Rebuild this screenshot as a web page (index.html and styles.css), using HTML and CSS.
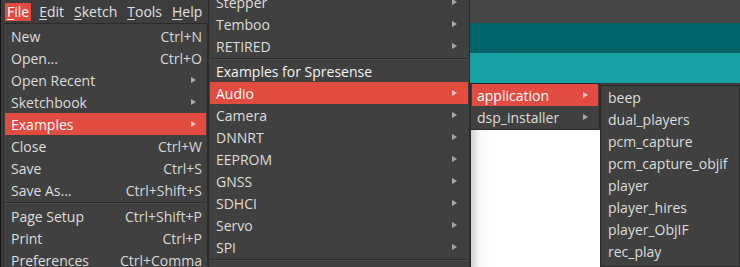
FILE: index.html
```html
<!DOCTYPE html>
<html>
<head>
<meta charset="utf-8">
<link rel="stylesheet" href="styles.css">
</head>
<body>
<div class="screen">
  <div class="col-file">
    <div class="menubar">
      <span class="mb-item active"><u>F</u>ile</span>
      <span class="mb-item"><u>E</u>dit</span>
      <span class="mb-item"><u>S</u>ketch</span>
      <span class="mb-item"><u>T</u>ools</span>
      <span class="mb-item"><u>H</u>elp</span>
    </div>
    <div class="menu file-menu">
      <div class="item"><span class="label">New</span><span class="key">Ctrl+N</span></div>
      <div class="item"><span class="label">Open...</span><span class="key">Ctrl+O</span></div>
      <div class="item"><span class="label">Open Recent</span><span class="arrow"></span></div>
      <div class="item"><span class="label">Sketchbook</span><span class="arrow"></span></div>
      <div class="item hl"><span class="label">Examples</span><span class="arrow"></span></div>
      <div class="item"><span class="label">Close</span><span class="key">Ctrl+W</span></div>
      <div class="item"><span class="label">Save</span><span class="key">Ctrl+S</span></div>
      <div class="item"><span class="label">Save As...</span><span class="key">Ctrl+Shift+S</span></div>
      <div class="sep"></div>
      <div class="item"><span class="label">Page Setup</span><span class="key">Ctrl+Shift+P</span></div>
      <div class="item"><span class="label">Print</span><span class="key">Ctrl+P</span></div>
      <div class="item"><span class="label">Preferences</span><span class="key">Ctrl+Comma</span></div>
    </div>
  </div>
  <div class="menu ex-menu">
    <div class="item"><span class="label">Stepper</span><span class="arrow"></span></div>
    <div class="item"><span class="label">Temboo</span><span class="arrow"></span></div>
    <div class="item"><span class="label">RETIRED</span><span class="arrow"></span></div>
    <div class="sep"></div>
    <div class="item header"><span class="label">Examples for Spresense</span></div>
    <div class="item hl"><span class="label">Audio</span><span class="arrow"></span></div>
    <div class="item"><span class="label">Camera</span><span class="arrow"></span></div>
    <div class="item"><span class="label">DNNRT</span><span class="arrow"></span></div>
    <div class="item"><span class="label">EEPROM</span><span class="arrow"></span></div>
    <div class="item"><span class="label">GNSS</span><span class="arrow"></span></div>
    <div class="item"><span class="label">SDHCI</span><span class="arrow"></span></div>
    <div class="item"><span class="label">Servo</span><span class="arrow"></span></div>
    <div class="item"><span class="label">SPI</span><span class="arrow"></span></div>
    <div class="sep"></div>
  </div>
  <div class="col-right">
    <div class="strip strip-grey"></div>
    <div class="strip strip-dteal"></div>
    <div class="strip strip-teal"></div>
    <div class="lower">
      <div class="audio-col">
        <div class="menu audio-menu">
          <div class="item hl"><span class="label">application</span><span class="arrow"></span></div>
          <div class="item"><span class="label">dsp_installer</span><span class="arrow"></span></div>
        </div>
        <div class="editor"></div>
      </div>
      <div class="menu app-menu">
        <div class="item"><span class="label">beep</span></div>
        <div class="item"><span class="label">dual_players</span></div>
        <div class="item"><span class="label">pcm_capture</span></div>
        <div class="item"><span class="label">pcm_capture_objif</span></div>
        <div class="item"><span class="label">player</span></div>
        <div class="item"><span class="label">player_hires</span></div>
        <div class="item"><span class="label">player_ObjIF</span></div>
        <div class="item"><span class="label">rec_play</span></div>
      </div>
    </div>
  </div>
</div>
</body>
</html>
```

FILE: styles.css
```css
html, body {
  margin: 0;
  padding: 0;
  background: #3d3d3d;
}
.screen {
  width: 740px;
  height: 267px;
  overflow: hidden;
  display: flex;
  font-family: "Open Sans", "Noto Sans", sans-serif;
  font-size: 14px;
  color: #dedede;
}
.col-file {
  width: 208px;
  flex: none;
  background: #3d3d3d;
  border-left: 1px solid #111;
  box-sizing: border-box;
}
.menubar {
  height: 23px;
  display: flex;
  align-items: flex-start;
  padding: 3px 0 0 4px;
  box-sizing: border-box;
  gap: 6px;
}
.mb-item {
  padding: 0 2px;
  height: 18px;
  line-height: 18px;
  color: #e0e0e0;
}
.mb-item u {
  text-decoration-thickness: 1px;
  text-underline-offset: 2px;
}
.mb-item.active {
  background: #e24b3f;
  color: #fff;
}
.menu {
  background: #404040;
  border: 1px solid #2c2c2c;
  padding: 1px;
  box-sizing: border-box;
}
.file-menu {
  margin-left: 2px;
  height: 260px;
}
.item {
  display: flex;
  align-items: center;
  height: 22px;
  padding: 0 4px 0 6px;
  white-space: nowrap;
}
.label {
  flex: 1;
}
.key {
  color: #d8d8d8;
}
.arrow {
  width: 0;
  height: 0;
  border-top: 3px solid transparent;
  border-bottom: 3px solid transparent;
  border-left: 5px solid #a8a8a8;
  margin-right: 4px;
}
.item.hl {
  background: #e24b3f;
  color: #fff;
}
.item.hl .arrow {
  border-left-color: #f3c8c3;
}
.item.header {
  color: #f4f4f4;
}
.sep {
  height: 1px;
  margin: 1px 0 0;
  background: #2e2e2e;
  border-bottom: 1px solid #4a4a4a;
}
.file-menu .sep {
  margin: 1px 0 1px;
}
.ex-menu {
  width: 262px;
  flex: none;
  margin-top: -11px;
  height: 292px;
}
.ex-menu .arrow {
  margin-right: 7px;
}
.file-menu .arrow {
  margin-right: 6px;
}
.col-right {
  flex: 1;
  display: flex;
  flex-direction: column;
  min-width: 0;
}
.strip-grey {
  height: 23px;
  background: #464646;
}
.strip-dteal {
  height: 30px;
  background: #006468;
}
.strip-teal {
  height: 30px;
  background: #17a1a5;
}
.lower {
  flex: 1;
  display: flex;
}
.audio-col {
  width: 130px;
  flex: none;
  display: flex;
  flex-direction: column;
}
.audio-menu {
  height: 47px;
  padding-top: 0;
}
.audio-menu .arrow {
  margin-right: 6px;
}
.audio-menu .item {
  padding-left: 5px;
}
.editor {
  flex: 1;
  background: linear-gradient(to right, #cfcfcf 0, #f6f6f6 8px, #ffffff 20px);
  border-left: 1px solid #2c2c2c;
}
.app-menu {
  flex: 1;
  margin-top: 2px;
  padding-top: 0;
}
.app-menu .item {
  padding-left: 6px;
}
```
